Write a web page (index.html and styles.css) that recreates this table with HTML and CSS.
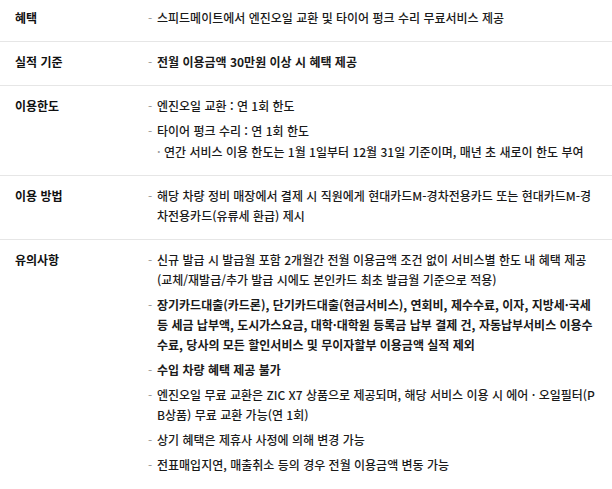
FILE: index.html
```html
<!DOCTYPE html>
<html lang="ko">
<head>
<meta charset="utf-8">
<link rel="stylesheet" href="styles.css">
</head>
<body>
<div class="benefit">
  <div class="row">
    <div class="label">혜택</div>
    <ul class="items">
      <li>스피드메이트에서 엔진오일 교환 및 타이어 펑크 수리 무료서비스 제공</li>
    </ul>
  </div>
  <div class="row">
    <div class="label">실적 기준</div>
    <ul class="items">
      <li class="strong">전월 이용금액 30만원 이상 시 혜택 제공</li>
    </ul>
  </div>
  <div class="row">
    <div class="label">이용한도</div>
    <ul class="items">
      <li>엔진오일 교환 : 연 1회 한도</li>
      <li>타이어 펑크 수리 : 연 1회 한도
        <p class="sub">연간 서비스 이용 한도는 1월 1일부터 12월 31일 기준이며, 매년 초 새로이 한도 부여</p>
      </li>
    </ul>
  </div>
  <div class="row">
    <div class="label">이용 방법</div>
    <ul class="items">
      <li>해당 차량 정비 매장에서 결제 시 직원에게 현대카드M-경차전용카드 또는 현대카드M-경차전용카드(유류세 환급) 제시</li>
    </ul>
  </div>
  <div class="row last">
    <div class="label">유의사항</div>
    <ul class="items">
      <li>신규 발급 시 발급월 포함 2개월간 전월 이용금액 조건 없이 서비스별 한도 내 혜택 제공<br>(교체/재발급/추가 발급 시에도 본인카드 최초 발급월 기준으로 적용)</li>
      <li class="strong">장기카드대출(카드론), 단기카드대출(현금서비스), 연회비, 제수수료, 이자, 지방세·국세 등 세금 납부액, 도시가스요금, 대학·대학원 등록금 납부 결제 건, 자동납부서비스 이용수수료, 당사의 모든 할인서비스 및 무이자할부 이용금액 실적 제외</li>
      <li class="strong">수입 차량 혜택 제공 불가</li>
      <li>엔진오일 무료 교환은 ZIC X7 상품으로 제공되며, 해당 서비스 이용 시 에어 · 오일필터(PB상품) 무료 교환 가능(연 1회)</li>
      <li>상기 혜택은 제휴사 사정에 의해 변경 가능</li>
      <li>전표매입지연, 매출취소 등의 경우 전월 이용금액 변동 가능</li>
    </ul>
  </div>
</div>
</body>
</html>
```
FILE: styles.css
```css
html, body {
  margin: 0;
  padding: 0;
  background: #fff;
}
body {
  font-family: "Noto Sans CJK KR", "Noto Sans", sans-serif;
  font-size: 12px;
  line-height: 20px;
  color: #1a1a1a;
}
.benefit {
  width: 612px;
}
.row {
  display: grid;
  grid-template-columns: 148px 1fr;
  padding: 8px 16px 13px 0;
  border-bottom: 1px solid #e6e6e6;
}
.row + .row {
  padding-top: 10px;
}
.row.last {
  border-bottom: none;
}
.label {
  padding-left: 15px;
  font-weight: 700;
  color: #111;
}
.items {
  list-style: none;
  margin: 0;
  padding: 0;
  word-break: break-all;
}
.items li {
  padding-left: 9px;
  text-indent: -9px;
  font-weight: 500;
}
.items li + li {
  margin-top: 5px;
}
.items li::before {
  content: "-";
  color: #999;
  display: inline-block;
  width: 9px;
  text-indent: 0;
  font-weight: 400;
}
.items li.strong {
  font-weight: 700;
}
.sub {
  margin: 1px 0 0;
  padding-left: 7px;
  text-indent: -7px;
}
.sub::before {
  content: "·";
  color: #999;
  display: inline-block;
  width: 7px;
  text-indent: 0;
}
```
